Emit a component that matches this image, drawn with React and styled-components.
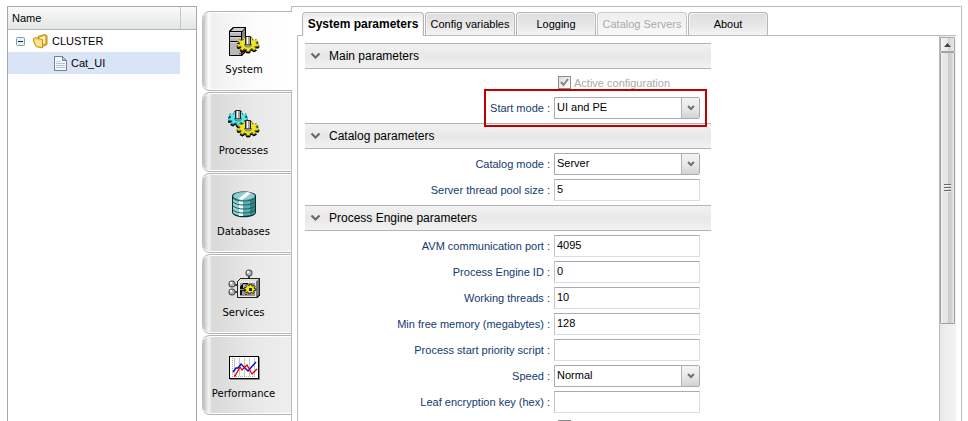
import React, { useState } from "react";
import styled, { createGlobalStyle, css } from "styled-components";

const GlobalStyle = createGlobalStyle`
  * { box-sizing: border-box; }
  body { margin: 0; background: #fff; color: #000; font-family: "Liberation Sans", Arial, sans-serif; font-size: 11px; overflow: hidden; }
  button, input, select { font: inherit; color: inherit; margin: 0; }
`;

const Page = styled.div`
  display: flex;
  height: 100vh;
  padding: 6px 6px 0 7px;
`;

const TreePanel = styled.nav`
  flex: 0 0 190px;
  margin-right: 5px;
  border: 1px solid #a2a7b1;
  border-bottom: 0;
`;
const TreeHeader = styled.div`
  display: flex;
  height: 23px;
  line-height: 22px;
  border-bottom: 1px solid #b4b4b4;
  background: linear-gradient(#fafafa, #f0f1f1 45%, #e4e6e7);
`;
const TreeColumn = styled.div`
  flex: 1;
  padding-left: 4px;
`;
const TreeHeaderEnd = styled.div`
  width: 16px;
  border-left: 1px solid #c4c7ca;
`;
const TreeRow = styled.div`
  display: flex;
  align-items: center;
  gap: 4px;
  height: 22px;
  margin-right: 16px;
  padding-left: ${(p) => (p.$level ? 46 : 8)}px;
  background: ${(p) => (p.$selected ? "#d9e4f6" : "transparent")};
`;
const Toggle = styled.button`
  display: flex;
  width: 9px;
  height: 9px;
  margin-right: 4px;
  padding: 0;
  border: 0;
  background: none;
`;

const SideTabs = styled.div`
  flex: 0 0 89px;
  min-width: 0;
  display: flex;
  flex-direction: column;
  gap: 1px;
  padding-top: 5px;
  z-index: 1;
`;
const SideTab = styled.button`
  display: flex;
  flex-direction: column;
  align-items: center;
  flex: 0 0 80px;
  width: ${(p) => (p.$active ? 90 : 89)}px;
  padding: 14px 6px 0 0;
  border: solid #b2b2b2;
  border-width: 1px 0;
  border-radius: 8px 0 0 8px;
  background: ${(p) =>
    p.$active
      ? "linear-gradient(90deg, #bcbcbc, #c8c8c8 2px, #ececec 5px, #fff 7px, #f0f0f0 10px, #fcfcfc 60%, #fff)"
      : "linear-gradient(90deg, #bcbcbc, #c4c4c4 2px, #e4e4e4 5px, #f4f4f4 7px, #d9d9d9 10px, #e9e9e9 60%, #eee)"};
  box-shadow: inset 0 1px #fff, inset 0 -1px #fff;
  font-family: "DejaVu Sans", Verdana, sans-serif;
  font-size: 10px;
  line-height: 12px;
`;
const SideIcon = styled.svg`
  width: 32px;
  height: 32px;
  margin-bottom: 6px;
  flex: none;
`;

const MainPanel = styled.main`
  flex: 1;
  min-width: 0;
  display: flex;
  flex-direction: column;
  padding: 5px 5px 0;
  border: 1px solid #bbbcc0;
  border-bottom: 0;
`;
const TabBar = styled.div`
  display: flex;
  gap: 1px;
  padding-left: 5px;
`;
const Tab = styled.button`
  min-width: ${(p) => (p.$wide ? 90 : 80)}px;
  height: 23px;
  padding: 0 4px 1px;
  border: 1px solid #b4b5b8;
  border-bottom: 0;
  border-radius: 4px 4px 0 0;
  background: linear-gradient(#dedede, #e6e6e6 50%, #f3f3f3);
  box-shadow: inset 1px 1px #f4f4f4, inset -1px 0 #f0f0f0;
  &:disabled { color: #aaa; border-color: #c8c8c8; background: linear-gradient(#eee, #f8f8f8); }
  ${(p) =>
    p.$active &&
    css`
      height: 24px;
      margin-bottom: -1px;
      min-width: 122px;
      background: linear-gradient(#e8e8e8, #fff 50%);
      font-size: 12px;
      font-weight: bold;
      position: relative;
    `}
`;
const TabPage = styled.div`
  flex: 1;
  min-height: 0;
  display: flex;
  border: solid #bbbcc0;
  border-width: 1px 0 0 1px;
`;
const Form = styled.form`
  flex: 1;
  min-width: 0;
  overflow: hidden;
  padding: 7px;
`;
const Section = styled.section`
  max-width: 406px;
`;
const SectionHeader = styled.h2`
  display: flex;
  align-items: center;
  gap: 8px;
  height: 26px;
  margin: 0;
  padding-left: 5px;
  border: solid #b3b3b3;
  border-width: 1px 0;
  background: linear-gradient(#f2f2f2, #e9e8e9 50%, #f3f2f3);
  font-size: 12px;
  font-weight: normal;
`;
const Rows = styled.div`
  display: flex;
  flex-direction: column;
  gap: 4px;
  padding: 4px 0;
`;
const Row = styled.div`
  display: grid;
  grid-template-columns: minmax(0, 249px) 146px;
  align-items: ${(p) => (p.$check ? "start" : "center")};
  height: ${(p) => (p.$check ? 20 : 22)}px;
  position: relative;
`;
const Label = styled.label`
  padding-right: 4px;
  text-align: right;
  color: #123a70;
`;
const TextInput = styled.input`
  width: 100%;
  height: 22px;
  padding: 0 2px 2px;
  border: 1px solid #d9dce6;
  border-top-color: #a9abb2;
  border-left-color: #c2c5cd;
  border-radius: 0;
  background: #fff;
`;
const SelectBox = styled.div`
  display: grid;
  grid-template-columns: 1fr 18px;
  height: 22px;
  border: 1px solid #a9abb2;
  border-radius: 0 2px 2px 0;
`;
const Select = styled.select`
  grid-area: 1 / 1 / 2 / 3;
  appearance: none;
  width: 100%;
  padding: 0 20px 2px 2px;
  border: 0;
  background: transparent;
`;
const SelectArrow = styled.span`
  grid-area: 1 / 2;
  display: flex;
  align-items: center;
  justify-content: center;
  border-left: 1px solid #b0b2b5;
  background: linear-gradient(#f4f4f4, #e9e9e9 50%, #d2d2d2);
  pointer-events: none;
`;
const CheckLabel = styled.label`
  grid-column: 2;
  display: flex;
  align-items: center;
  gap: 3px;
  height: 19px;
  padding-left: 4px;
  color: #aaa;
`;
const CheckFrame = styled.span`
  display: grid;
  width: 13px;
  height: 13px;
  > * { grid-area: 1 / 1; }
`;
const CheckInput = styled.input`
  appearance: none;
  width: 13px;
  height: 13px;
  border: 1px solid #8c8c8c;
  background: linear-gradient(135deg, #dcdcdc, #fff);
`;
const Highlight = styled.div`
  position: absolute;
  top: -8px;
  bottom: -8px;
  right: 4px;
  width: 223px;
  border: 2px solid #c00000;
  z-index: 1;
  pointer-events: none;
`;

const Scrollbar = styled.div`
  flex: 0 0 17px;
  display: flex;
  flex-direction: column;
  padding: 1px 1px 0 0;
  border-left: 1px solid #b9b9b9;
  background: linear-gradient(90deg, #e8e8e8, #efefef 40%, #f2f2f2);
`;
const ScrollButton = styled.button`
  display: flex;
  align-items: center;
  justify-content: center;
  flex: 0 0 15px;
  padding: 0;
  border: 1px solid #a8a8a8;
  border-radius: 1px;
  background: linear-gradient(90deg, #f5f5f5, #e8e8e8 50%, #d2d2d2 55%, #e8e8e8);
`;
const ScrollThumb = styled.div`
  display: flex;
  align-items: center;
  justify-content: center;
  flex: 0 0 272px;
  border: 1px solid #a0a0a0;
  border-radius: 1px;
  background: linear-gradient(90deg, #f2f2f2, #e6e6e6 20%, #e5e5e5 50%, #c9c9c9 56%, #d3d3d3 80%, #ececec);
`;

/* A gear seen in perspective: teeth alternate between an outer and an inner ellipse. */
function gearPoints(cx, cy, rx, ry, teeth = 9) {
  const points = [];
  for (let i = 0; i < teeth; i += 1) {
    [[-0.32, 0.74], [-0.22, 1], [0.22, 1], [0.32, 0.74]].forEach(([offset, reach]) => {
      const angle = ((i + offset) / teeth) * Math.PI * 2 + 0.15;
      points.push(`${(cx + Math.cos(angle) * rx * reach).toFixed(1)},${(cy + Math.sin(angle) * ry * reach).toFixed(1)}`);
    });
  }
  return points.join(" ");
}

function Gear({ cx, cy, rx = 11, ry = 7, light, dark }) {
  return (
    <g shapeRendering="auto">
      <polygon points={gearPoints(cx, cy + 2, rx, ry)} fill="#000" stroke="#000" />
      <polygon points={gearPoints(cx, cy + 1, rx, ry)} fill={dark} />
      <polygon points={gearPoints(cx, cy, rx, ry)} fill={light} stroke={dark} strokeDasharray="2 2" />
      <ellipse cx={cx} cy={cy + 1} rx="3.5" ry="2" fill="#f4f4f4" stroke={dark} />
      <path d={`M${cx - 2.5} ${cy + 1}V${cy - 7.5}H${cx + 2.5}V${cy + 1}Z`} fill="#a4a4a4" stroke="#222" />
      <path d={`M${cx - 0.5} ${cy}V${cy - 7}`} stroke="#fff" />
    </g>
  );
}

function SystemIcon() {
  return (
    <SideIcon viewBox="0 0 32 32" aria-hidden="true">
      <path d="M1 5L5 1H18V26L14 30H1Z" fill="#000" />
      <path d="M3 5L6 2H17L14 5Z" fill="#d0d0d0" />
      <path d="M14 6L17 3V25L14 28Z" fill="#848484" />
      <path d="M2 6H13V10H2ZM2 11H13V15H2ZM2 16H13V29H2Z" fill="#b9b9b9" />
      <path d="M2 6H13V7H2ZM2 11H13V12H2ZM2 16H13V17H2Z" fill="#d5d5d5" />
      <rect x="11" y="27" width="3" height="1" fill="#f00" />
      <Gear cx={20} cy={18} light="#ece428" dark="#77720d" />
    </SideIcon>
  );
}

function ProcessesIcon() {
  return (
    <SideIcon viewBox="0 0 32 32" aria-hidden="true">
      <Gear cx={10} cy={11} rx={10} light="#5ce6ef" dark="#087e86" />
      <Gear cx={20} cy={21} light="#ece428" dark="#77720d" />
    </SideIcon>
  );
}

function DatabasesIcon() {
  return (
    <SideIcon viewBox="0 0 32 32" aria-hidden="true">
      <path d="M4 8C4 2 28 2 28 8V24C28 31 4 31 4 24Z" fill="#062f31" />
      <path d="M5 9C5 13 27 13 27 9V24C27 29 5 29 5 24Z" fill="#5fabad" />
      <path d="M5 11C8 14 10 14 13 14V28C10 27 7 27 5 24Z" fill="#9bcecf" />
      <path d="M11 13H15V28H11Z" fill="#eefafa" />
      <path d="M22 12L27 9V24L22 27Z" fill="#348487" />
      <ellipse cx="16" cy="8" rx="11" ry="4" fill="#8fcdd0" />
      <path d="M10 11L19 4L23 5L14 12Z" fill="#fff" />
      <path d="M5 14C9 18 23 18 27 14M5 18C9 22 23 22 27 18M5 22C9 26 23 26 27 22M5 10C9 14 23 14 27 10" fill="none" stroke="#176266" />
    </SideIcon>
  );
}

function Ball({ cx, cy }) {
  return (
    <g shapeRendering="auto">
      <circle cx={cx} cy={cy} r="3.5" fill="#444" />
      <circle cx={cx} cy={cy} r="2.5" fill="#b4b4b4" />
      <circle cx={cx - 1} cy={cy - 1} r="1.2" fill="#fff" />
    </g>
  );
}

function ServicesIcon() {
  return (
    <SideIcon viewBox="0 0 32 32" shapeRendering="crispEdges" aria-hidden="true">
      <path d="M20 6H22V11H20ZM6 15H11V17H6ZM6 22H11V24H6Z" fill="#444" />
      <path d="M9 12L12 9H32V26L29 29H9Z" fill="#222" />
      <path d="M10 12L12 10H30L28 12Z" fill="#ddd" />
      <path d="M28 12L31 10V25L28 28Z" fill="#777" />
      <path d="M10 12H28V28H10Z" fill="#e7e7e7" />
      <path d="M12 14H27V27H12Z" fill="#959595" />
      <path d="M12 17L15 14H20V15H15V19H20V20H12ZM12 21H20V22H14V26H12Z" fill="#111" />
      <rect x="15" y="16" width="4" height="3" fill="#bbb" />
      <polygon points={gearPoints(22, 20, 6, 5, 8)} fill="#eee81b" stroke="#222" shapeRendering="auto" />
      <path d="M21 19H24V22H21Z" fill="#222" />
      <rect x="17" y="25" width="2" height="1" fill="#c00" />
      <Ball cx={21} cy={4} />
      <Ball cx={4} cy={15} />
      <Ball cx={4} cy={23} />
    </SideIcon>
  );
}

function PerformanceIcon() {
  return (
    <SideIcon viewBox="0 0 32 32" shapeRendering="crispEdges" aria-hidden="true">
      <rect x="2" y="7" width="30" height="23" fill="#888" />
      <rect x="1" y="6" width="30" height="23" fill="#000" />
      <rect x="2" y="7" width="28" height="21" fill="#fff" />
      <path d="M6.5 8V26M11.5 8V26M16.5 8V26M21.5 8V26M26.5 8V26" stroke="#c4c4c4" />
      <path d="M4.5 8V26M4 26.5H28" stroke="#aaa" strokeDasharray="1 1" />
      <g fill="none" shapeRendering="auto">
        <path d="M5 22L8 18H10L13 14L20 21L28 12" stroke="#0000d8" strokeWidth="1.3" />
        <path d="M6 26H7L12 17L14 20L19 15L24 24L29 19" stroke="#e00000" strokeWidth="1.3" />
      </g>
    </SideIcon>
  );
}

const FolderIcon = () => (
  <svg width="15" height="15" viewBox="0 0 15 15" aria-hidden="true">
    <path d="M5 2.500L11.500 .5L14 1.500V10.500L8 13.500L5 12Z" fill="#e3b43a" stroke="#c28d1e" />
    <path d="M7 3.500L12 2V9L7 11Z" fill="#fff4c9" />
    <path d="M.5 4.500L3.500 3.500L5 4.500L9.500 5.500V14L3 12.500L.5 7Z" fill="#f9d65c" stroke="#c9921f" />
    <path d="M2 6L8.500 7V12.500L4 11.500Z" fill="#fde896" />
  </svg>
);
const DocumentIcon = () => (
  <svg width="13" height="15" viewBox="0 0 13 15" aria-hidden="true">
    <path d="M.5 .5H8.500L12.500 4.500V14.500H.5Z" fill="#f6f8fc" stroke="#707f9e" />
    <path d="M8.500 .5V4.500H12.500Z" fill="#c5cee0" stroke="#707f9e" />
    <path d="M2 7.500H11M2 9.500H11M2 11.500H11" stroke="#afbcda" />
    <path d="M2 5.500H7" stroke="#ccd5e8" />
  </svg>
);
const MinusIcon = () => (
  <svg width="9" height="9" viewBox="0 0 9 9" aria-hidden="true">
    <rect x=".5" y=".5" width="8" height="8" rx="1" fill="#e9f1f5" stroke="#7e9db3" />
    <path d="M2 4.500H7" stroke="#222" />
  </svg>
);
const SectionChevron = () => (
  <svg width="11" height="8" viewBox="0 0 11 8" aria-hidden="true">
    <path d="M1.500 1.500L5.500 5.500L9.500 1.500" fill="none" stroke="#666" strokeWidth="2" />
  </svg>
);
const SmallChevron = () => (
  <svg width="8" height="6" viewBox="0 0 8 6" aria-hidden="true">
    <path d="M1 1L4 4L7 1" fill="none" stroke="#707070" strokeWidth="2" />
  </svg>
);
const CheckMark = () => (
  <svg width="13" height="13" viewBox="0 0 13 13" aria-hidden="true">
    <path d="M3 6L5.500 9L10 3" fill="none" stroke="#7f8690" strokeWidth="2" />
  </svg>
);

const sideItems = [
  ["System", SystemIcon],
  ["Processes", ProcessesIcon],
  ["Databases", DatabasesIcon],
  ["Services", ServicesIcon],
  ["Performance", PerformanceIcon],
];

const tabs = [
  { name: "System parameters", active: true },
  { name: "Config variables", wide: true },
  { name: "Logging" },
  { name: "Catalog Servers", wide: true, disabled: true },
  { name: "About" },
];

const sections = [
  {
    title: "Main parameters",
    fields: [
      { id: "active", type: "check", label: "Active configuration", checked: true, disabled: true },
      { id: "start-mode", type: "select", label: "Start mode", value: "UI and PE", highlight: true },
    ],
  },
  {
    title: "Catalog parameters",
    fields: [
      { id: "catalog-mode", type: "select", label: "Catalog mode", value: "Server" },
      { id: "pool-size", label: "Server thread pool size", value: "5" },
    ],
  },
  {
    title: "Process Engine parameters",
    fields: [
      { id: "avm-port", label: "AVM communication port", value: "4095" },
      { id: "engine-id", label: "Process Engine ID", value: "0" },
      { id: "threads", label: "Working threads", value: "10" },
      { id: "memory", label: "Min free memory (megabytes)", value: "128" },
      { id: "priority", label: "Process start priority script", value: "" },
      { id: "speed", type: "select", label: "Speed", value: "Normal" },
      { id: "leaf-key", label: "Leaf encryption key (hex)", value: "" },
      { id: "option", type: "check", label: "" },
    ],
  },
];

function Field({ field }) {
  const [value, setValue] = useState(field.value);
  const [checked, setChecked] = useState(Boolean(field.checked));

  if (field.type === "check") {
    return (
      <Row $check>
        <CheckLabel>
          <CheckFrame>
            <CheckInput
              type="checkbox"
              checked={checked}
              disabled={field.disabled}
              onChange={(event) => setChecked(event.target.checked)}
            />
            {checked && <CheckMark />}
          </CheckFrame>
          {field.label}
        </CheckLabel>
      </Row>
    );
  }

  return (
    <Row>
      <Label htmlFor={field.id}>{field.label} :</Label>
      {field.type === "select" ? (
        <SelectBox>
          <Select id={field.id} value={value} onChange={(event) => setValue(event.target.value)}>
            <option>{field.value}</option>
          </Select>
          <SelectArrow>
            <SmallChevron />
          </SelectArrow>
        </SelectBox>
      ) : (
        <TextInput id={field.id} type="text" value={value} onChange={(event) => setValue(event.target.value)} />
      )}
      {field.highlight && <Highlight />}
    </Row>
  );
}

export default function App() {
  return (
    <>
      <GlobalStyle />
      <Page>
        <TreePanel>
          <TreeHeader>
            <TreeColumn>Name</TreeColumn>
            <TreeHeaderEnd />
          </TreeHeader>
          <TreeRow>
            <Toggle type="button" aria-label="Collapse">
              <MinusIcon />
            </Toggle>
            <FolderIcon />
            CLUSTER
          </TreeRow>
          <TreeRow $level={1} $selected>
            <DocumentIcon />
            Cat_UI
          </TreeRow>
        </TreePanel>

        <SideTabs>
          {sideItems.map(([name, Icon], index) => (
            <SideTab key={name} type="button" $active={index === 0}>
              <Icon />
              {name}
            </SideTab>
          ))}
        </SideTabs>

        <MainPanel>
          <TabBar role="tablist">
            {tabs.map((tab) => (
              <Tab
                key={tab.name}
                type="button"
                role="tab"
                aria-selected={Boolean(tab.active)}
                disabled={tab.disabled}
                $active={tab.active}
                $wide={tab.wide}
              >
                {tab.name}
              </Tab>
            ))}
          </TabBar>
          <TabPage>
            <Form>
              {sections.map((section) => (
                <Section key={section.title}>
                  <SectionHeader>
                    <SectionChevron />
                    {section.title}
                  </SectionHeader>
                  <Rows>
                    {section.fields.map((field) => (
                      <Field key={field.id} field={field} />
                    ))}
                  </Rows>
                </Section>
              ))}
            </Form>
            <Scrollbar>
              <ScrollButton type="button" aria-label="Scroll up">
                <svg width="7" height="4" viewBox="0 0 7 4" aria-hidden="true">
                  <path d="M0 4L3.500 0L7 4Z" fill="#444" />
                </svg>
              </ScrollButton>
              <ScrollThumb>
                <svg width="7" height="8" viewBox="0 0 7 8" aria-hidden="true">
                  <path d="M0 .5H7M0 3.500H7M0 6.500H7" stroke="#666" />
                  <path d="M0 1.500H7M0 4.500H7M0 7.500H7" stroke="#eee" />
                </svg>
              </ScrollThumb>
            </Scrollbar>
          </TabPage>
        </MainPanel>
      </Page>
    </>
  );
}
